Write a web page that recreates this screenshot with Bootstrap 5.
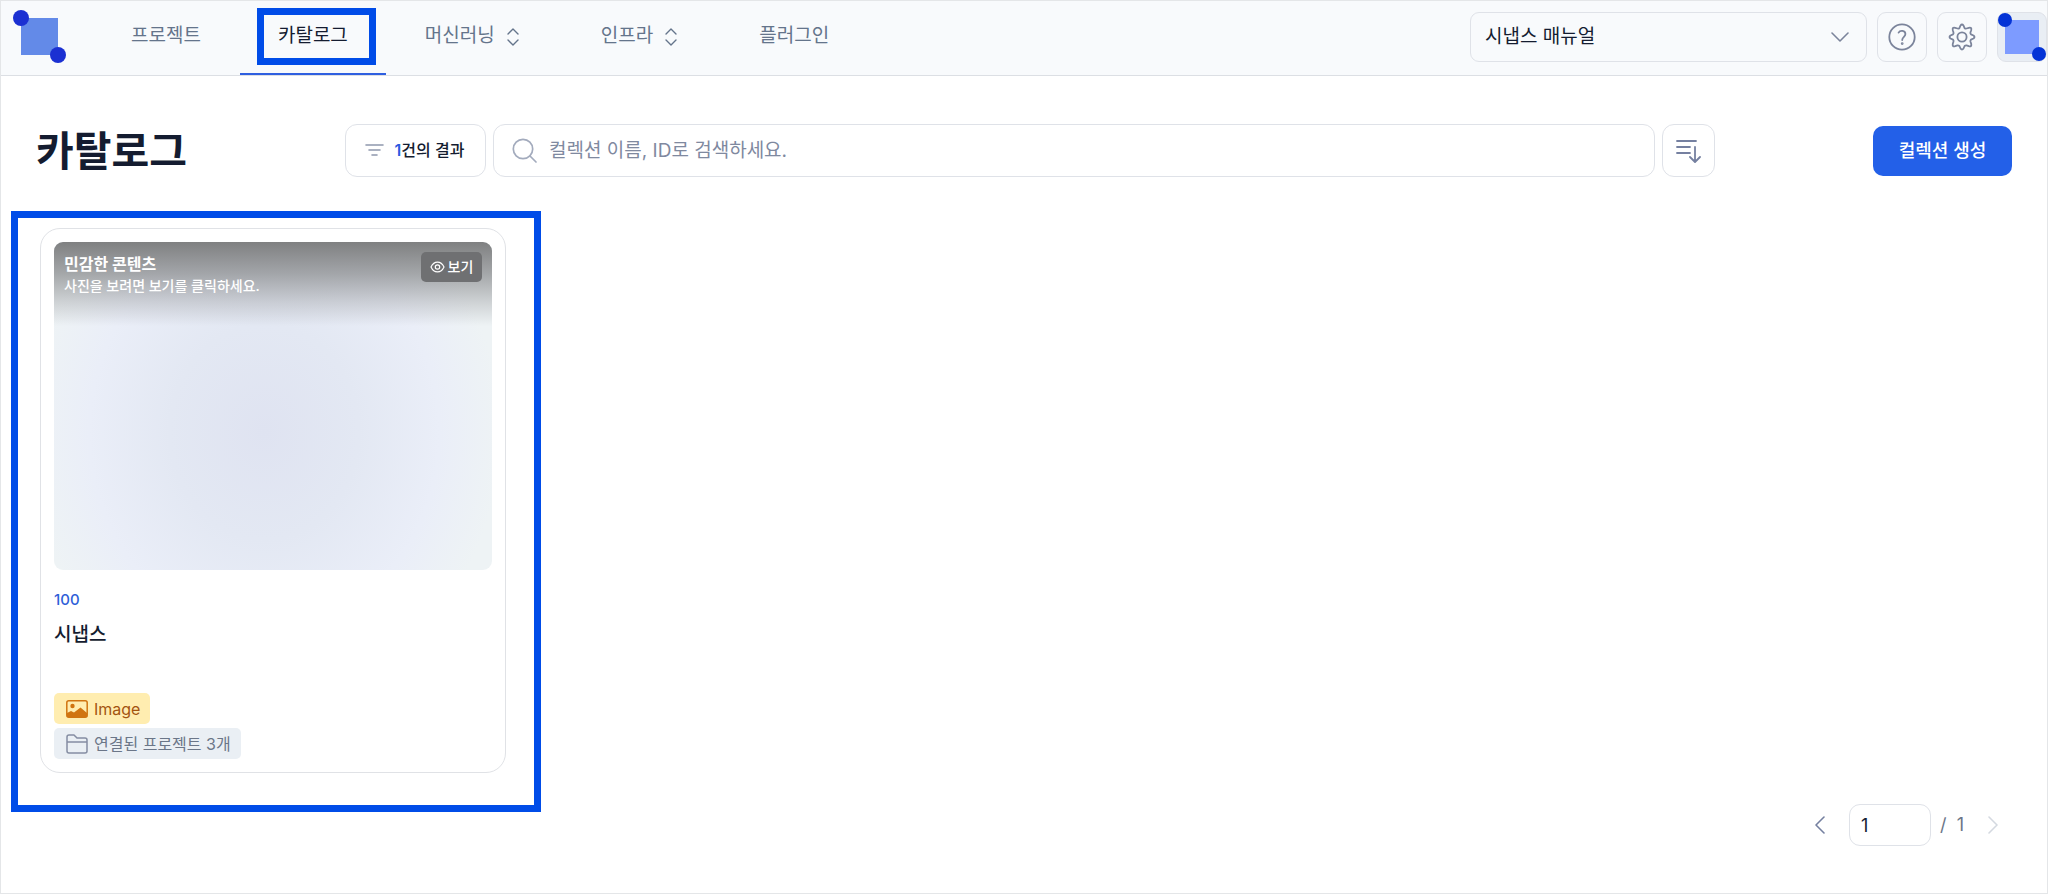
<!DOCTYPE html>
<html lang="ko">
<head>
<meta charset="utf-8">
<meta name="viewport" content="width=device-width, initial-scale=1">
<title>카탈로그</title>
<link href="https://cdn.jsdelivr.net/npm/bootstrap@5.3.0/dist/css/bootstrap.min.css" rel="stylesheet">
<style>
  :root { --ink: #141c30; --muted: #64748b; --line: #dfe2e8; --brand: #2360e8; --mark: #004ce8; }
  body { font-family: Inter, "Noto Sans CJK KR", sans-serif; color: var(--ink); font-size: 18px; line-height: 24px; }
  svg { display: block; flex: none; fill: none; stroke: currentColor; stroke-linecap: round; stroke-linejoin: round; }
  svg.logo { stroke: none; }
  .app { min-height: 100vh; border: 1px solid #e4e6e8; }
  .topbar { height: 75px; background: #f8fafc; border-bottom: 1px solid #dcdfe4; padding: 0 0 2px 11px; }
  .brand { margin-right: 26px; }
  .tabs a { color: var(--muted); font-size: 19px; text-decoration: none; height: 75px; padding: 0 39px 2px; position: relative; }
  .tabs a svg { margin-top: 2px; }
  .tabs a.active { color: var(--ink); border-bottom: 2px solid #2f5fe0; padding: 0 38px; margin-bottom: -2px; }
  .tabs .callout { position: absolute; inset: 8px 10px 8px 17px; border: 7px solid var(--mark); pointer-events: none; }
  .tool { background-color: #f8fafc; border: 1px solid var(--line); border-radius: 9px; height: 50px; }
  .tool-sq { width: 50px; color: #7b849b; padding: 0; }
  .tools { gap: 10px; }
  .workspace { width: 397px; padding: 0 14px; font-size: 19px; color: var(--ink);
    background-image: url("data:image/svg+xml,%3Csvg xmlns='http://www.w3.org/2000/svg' viewBox='0 0 18 10'%3E%3Cpath d='M1 1l8 8 8-8' fill='none' stroke='%237b849b' stroke-width='1.6' stroke-linecap='round' stroke-linejoin='round'/%3E%3C/svg%3E");
    background-size: 18px 10px; background-position: right 17px center; }
  .avatar { background: #e9eef4; }
  .heading { display: grid; grid-template-columns: 309px 1fr 297px; padding: 48px 35px 0; }
  .heading h1 { font-size: 41px; line-height: 52px; font-weight: 700; margin: 0; }
  .bar { gap: 7px; }
  .field { height: 53px; background: #fff; border: 1px solid var(--line); border-radius: 12px; }
  .filter { width: 141px; font-size: 16px; line-height: 24px; font-weight: 500; color: var(--ink); gap: 11px; padding: 0 2px 2px 0; }
  .filter svg { color: #8f98ad; }
  .filter b { color: #2a5ae0; font-weight: 600; }
  .search { padding: 0 18px; gap: 12px; color: #a3abbd; }
  .search input { font-size: 19px; border: 0; outline: 0; padding: 0; color: var(--ink); background: none; }
  .search input::placeholder { color: #7f899f; opacity: 1; }
  .sort { width: 53px; color: #7580a0; padding: 0; }
  .create { background: var(--brand); color: #fff; height: 50px; width: 139px; border-radius: 10px; font-size: 18px; font-weight: 500; padding: 0; }
  .create:hover { background: #1c50c8; color: #fff; }
  .frame { width: 530px; margin: 34px 0 0 10px; border: 7px solid var(--mark); padding: 10px 28px 32px 22px; }
  .item { border: 1px solid #e0e2e6; border-radius: 20px; padding: 13px 13px 13px; }
  .thumb { height: 328px; border-radius: 9px; overflow: hidden;
    background: radial-gradient(ellipse 54% 82% at 48% 58%, #dfe3f1 0, #e3e8f3 40%, #eaeef8 74%, #eef3f5 100%); }
  .veil { height: 84px; padding: 10px; color: #fff; background: linear-gradient(#7f8081, rgba(140,142,144,.75) 38%, rgba(160,162,165,.4) 72%, rgba(200,202,205,0)); }
  .veil strong { font-size: 16px; line-height: 24px; font-weight: 700; }
  .veil span { font-size: 14px; line-height: 20px; font-weight: 500; }
  .show-btn { height: 30px; width: 61px; border-radius: 5px; background: #6f7072; color: #fff; font-size: 14px; font-weight: 500; gap: 3px; padding: 0; border: 0; }
  .count { color: #2f5fd8; font-size: 15px; line-height: 20px; font-weight: 500; margin-top: 20px; }
  .item h2 { font-size: 19px; line-height: 24px; font-weight: 500; margin: 13px 0 46px; }
  .chip { height: 31px; border-radius: 5px; padding: 0 10px 0 12px; gap: 6px; font-size: 16px; }
  .chip-image { background: #ffedb0; color: #a35410; }
  .chip-image svg { color: #d07410; }
  .chip-link { background: #eaeff4; color: #6b7688; }
  .chip-link svg { color: #858da2; }
  .pager { padding: 0 49px 0 0; margin-top: -8px; color: #6b7688; }
  .pager button { border: 0; background: none; padding: 0; color: #7580a0; }
  .pager button:disabled { color: #d4d9e0; }
  .pager input { width: 82px; height: 42px; border: 1px solid var(--line); border-radius: 11px; padding: 0 11px; margin: 0 9px 0 24px; color: var(--ink); }
</style>
</head>
<body>
<div class="app d-flex flex-column">
  <header class="topbar d-flex align-items-center justify-content-between">
    <div class="d-flex align-items-center">
      <a class="brand" href="#" aria-label="홈">
        <svg class="logo" width="54" height="54" viewBox="0 0 54 54"><rect x="9" y="8" width="37" height="37" fill="#638ae8"/><circle cx="9" cy="8" r="8" fill="#1b30d2"/><circle cx="46" cy="45" r="8" fill="#1b30d2"/></svg>
      </a>
      <nav class="tabs d-flex">
        <a class="d-flex align-items-center" href="#">프로젝트</a>
        <a class="d-flex align-items-center active" href="#" aria-current="page">카탈로그<i class="callout"></i></a>
        <a class="d-flex align-items-center gap-2" href="#">머신러닝
          <svg width="20" height="20" viewBox="0 0 20 20" stroke-width="1.4"><path d="M5 7l5-5 5 5M5 13l5 5 5-5"/></svg></a>
        <a class="d-flex align-items-center gap-2" href="#">인프라
          <svg width="20" height="20" viewBox="0 0 20 20" stroke-width="1.4"><path d="M5 7l5-5 5 5M5 13l5 5 5-5"/></svg></a>
        <a class="d-flex align-items-center" href="#">플러그인</a>
      </nav>
    </div>
    <div class="tools d-flex align-items-center">
      <select class="form-select tool workspace" aria-label="워크스페이스"><option>시냅스 매뉴얼</option></select>
      <button class="btn tool tool-sq d-flex align-items-center justify-content-center" aria-label="도움말">
        <svg width="28" height="28" viewBox="0 0 28 28" stroke-width="1.8"><circle cx="14" cy="14" r="12.7"/><path d="M10.6 9.6c1.500-2.600 6.800-2.200 6.800 1.400 0 2.600-3.200 3-3.200 6"/><circle cx="14.200" cy="20.600" r=".5" fill="currentColor"/></svg>
      </button>
      <button class="btn tool tool-sq d-flex align-items-center justify-content-center" aria-label="설정">
        <svg width="28" height="28" viewBox="0 0 28 28" stroke-width="1.8"><circle cx="14" cy="14" r="4.600"/><path d="M12.5 2.5Q14 .5 15.500 2.500L16.600 5.200Q17.500 5.800 18.500 5.500L20.800 4.800Q24 4 23.200 7.200L22.400 9.500Q22.200 10.600 23 11.400L25.500 12.500Q27.500 14 25.500 15.500L23 16.600Q22.200 17.500 22.400 18.500L23.200 20.800Q24 24 20.800 23.200L18.500 22.400Q17.500 22.200 16.600 23L15.500 25.500Q14 27.500 12.500 25.500L11.400 23Q10.500 22.200 9.500 22.400L7.200 23.200Q4 24 4.800 20.800L5.500 18.500Q5.800 17.500 5 16.600L2.500 15.500Q.5 14 2.500 12.500L5 11.400Q5.800 10.600 5.500 9.500L4.800 7.200Q4 4 7.200 4.800L9.500 5.500Q10.500 5.800 11.400 5.200Z"/></svg>
      </button>
      <button class="btn tool avatar p-0" aria-label="내 계정">
        <svg class="logo" width="48" height="48" viewBox="0 0 48 48"><rect x="7" y="7" width="34" height="34" fill="#7d9bff"/><circle cx="7" cy="7" r="7" fill="#0433d6"/><circle cx="41" cy="41" r="7" fill="#0433d6"/></svg>
      </button>
    </div>
  </header>

  <main>
    <div class="heading align-items-center">
      <h1>카탈로그</h1>
      <div class="bar d-flex">
        <button class="btn field filter d-flex align-items-center justify-content-center">
          <svg width="19" height="12" viewBox="0 0 19 12" stroke-width="1.600"><path d="M1 1h17M4 6h11M7 11h5"/></svg>
          <span><b>1</b>건의 결과</span>
        </button>
        <label class="field search d-flex align-items-center flex-grow-1">
          <svg width="25" height="25" viewBox="0 0 25 25" stroke-width="1.700"><circle cx="11" cy="11" r="9.700"/><path d="M18 18l6 6"/></svg>
          <input class="flex-grow-1" type="text" placeholder="컬렉션 이름, ID로 검색하세요." aria-label="컬렉션 검색">
        </label>
        <button class="btn field sort d-flex align-items-center justify-content-center" aria-label="정렬">
          <svg width="26" height="24" viewBox="0 0 26 24" stroke-width="1.800"><path d="M1 2h19M1 8h13M1 14h13M19 8v14M14 18l5 5 5-5"/></svg>
        </button>
      </div>
      <button class="btn create ms-auto">컬렉션 생성</button>
    </div>

    <section class="frame">
      <article class="item">
        <div class="thumb">
          <div class="veil d-flex justify-content-between align-items-start">
            <div class="d-flex flex-column"><strong>민감한 콘텐츠</strong><span>사진을 보려면 보기를 클릭하세요.</span></div>
            <button class="show-btn d-flex align-items-center justify-content-center">
              <svg width="15" height="12" viewBox="0 0 15 12" stroke-width="1.200"><path d="M1 6c3-6.500 10-6.500 13 0-3 6.500-10 6.500-13 0z"/><circle cx="7.500" cy="6" r="2.200"/></svg>보기</button>
          </div>
        </div>
        <div class="count">100</div>
        <h2>시냅스</h2>
        <div class="d-flex flex-column align-items-start gap-1">
          <span class="chip chip-image d-flex align-items-center">
            <svg width="22" height="18" viewBox="0 0 22 18" stroke-width="1.500"><rect x=".8" y=".8" width="20.400" height="16.400" rx="2"/><circle cx="6.500" cy="6" r="2.200" fill="currentColor" stroke="none"/><path d="M1 13l4-2 3 1.500L14.500 7.500 21 13v4H1z" fill="currentColor" stroke="none"/></svg>Image</span>
          <span class="chip chip-link d-flex align-items-center">
            <svg width="22" height="20" viewBox="0 0 22 20" stroke-width="1.500"><path d="M1 17V3a2 2 0 0 1 2-2h5l3 3h8a2 2 0 0 1 2 2v11a2 2 0 0 1-2 2H3a2 2 0 0 1-2-2zM1 8h20"/></svg>연결된 프로젝트 3개</span>
        </div>
      </article>
    </section>

    <nav class="pager d-flex align-items-center justify-content-end" aria-label="페이지">
      <button aria-label="이전"><svg width="10" height="18" viewBox="0 0 10 18" stroke-width="1.600"><path d="M9 1L1 9l8 8"/></svg></button>
      <input type="text" value="1" aria-label="현재 페이지">
      <span>/&nbsp; 1</span>
      <button class="ms-4" aria-label="다음" disabled><svg width="10" height="18" viewBox="0 0 10 18" stroke-width="1.600"><path d="M1 1l8 8-8 8"/></svg></button>
    </nav>
  </main>
</div>
<script src="https://cdn.jsdelivr.net/npm/bootstrap@5.3.0/dist/js/bootstrap.bundle.min.js"></script>
</body>
</html>
